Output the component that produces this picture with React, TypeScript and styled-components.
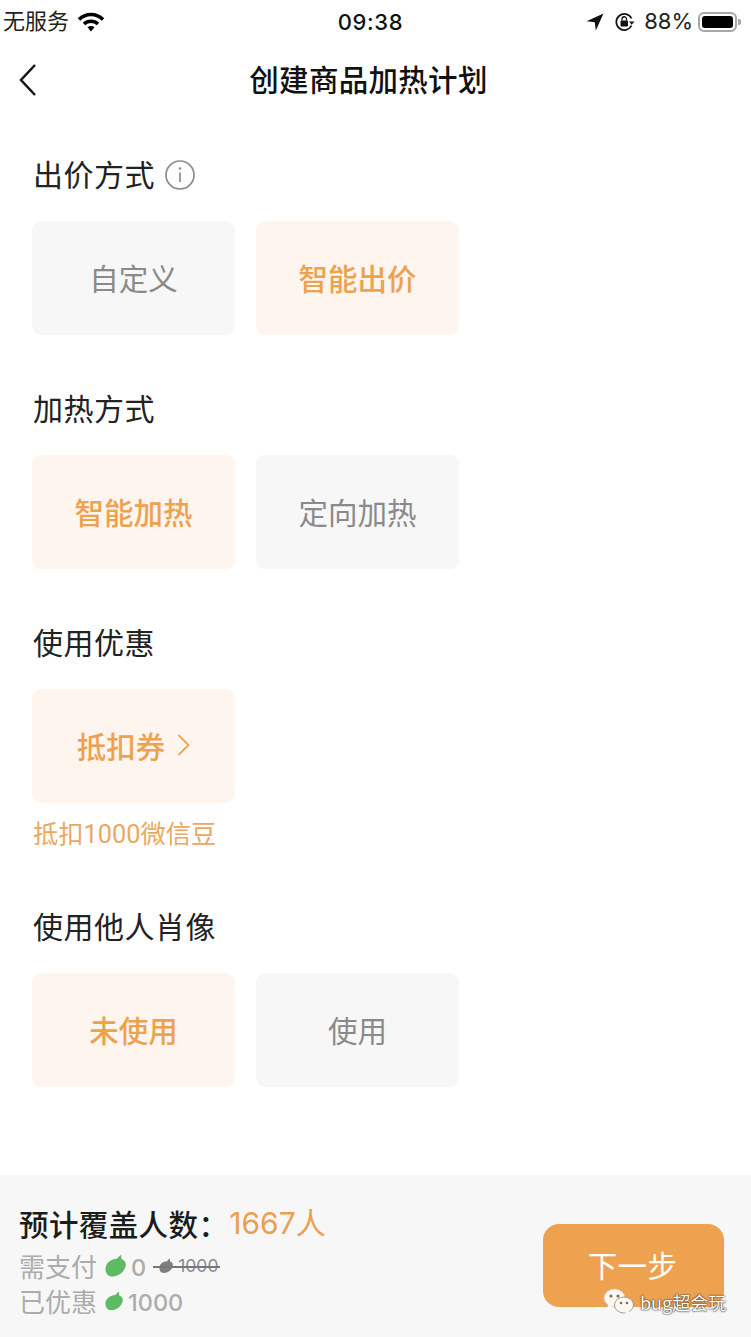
import React from "react";
import styled, { createGlobalStyle } from "styled-components";

const Global = createGlobalStyle`
  html, body { margin: 0; padding: 0; background: #fff; }
  * { box-sizing: border-box; }
  body { font-family: "Inter", "Noto Sans CJK SC", sans-serif; }
`;
const CJK = `"Noto Sans CJK SC", sans-serif`;
const Page = styled.div`
  position: relative; width: 751px; height: 1337px; display: flex; flex-direction: column; overflow: hidden; background: #fff;
`;
const StatusBar = styled.div`
  height: 41px; padding: 0 0 0 3px; display: grid; grid-template-columns: 1fr auto 1fr; align-items: center; color: #111;
`;
const StatusGroup = styled.div<{ $end?: boolean }>`
  display: flex; align-items: center; gap: 8px; justify-content: ${(p) => (p.$end ? "flex-end" : "flex-start")};
  padding-right: ${(p) => (p.$end ? "14px" : "0")};
`;
const Carrier = styled.span`font: 400 22px/37px ${CJK}; color: #222; padding-bottom: 4px;`;
const Clock = styled.span`font: 500 22px/41px "Inter", sans-serif; letter-spacing: 0.6px; color: #111; margin-right: 13px; padding-top: 2px;`;
const Percent = styled.span`font: 400 22px/41px "Inter", sans-serif; color: #222;  margin-left: 1px;`;
const LocationIcon = styled.svg`margin-right: 2px;`;
const Battery = styled.div`
  position: relative; width: 39px; height: 20px; margin-left: -3px; border: 2px solid #a8a8a8; border-radius: 6px; padding: 2px;
  &::after { content: ""; position: absolute; right: -6px; top: 5px; width: 3px; height: 6px; background: #a8a8a8; border-radius: 0 2px 2px 0; }
`;
const BatteryFill = styled.div`height: 100%; background: #000; border-radius: 3px;`;
const Nav = styled.div`
  position: relative; height: 79px; display: flex; align-items: center; justify-content: center; padding: 0 14px 5px 0;
`;
const Back = styled.svg`position: absolute; left: 18px; top: 22px;`;
const Title = styled.h1`margin: 0; font: 500 29.500px/40px ${CJK}; color: #111; letter-spacing: 0.3px;`;
const Main = styled.main`flex: 1; padding: 33px 0 0 32px;`;
const Section = styled.section`margin-bottom: 52px;`;
const LabelRow = styled.div`display: flex; align-items: center; gap: 10px; height: 44px; margin-bottom: 24px;`;
const Label = styled.h2`margin: 0; padding: 0 0 4px 1px; font: 400 30px/40px ${CJK}; color: #222; letter-spacing: 0.5px;`;
const Options = styled.div`display: flex; gap: 21px;`;
const Option = styled.div<{ $active?: boolean }>`
  width: 203px; height: 114px; border-radius: 9px; display: flex; align-items: center; justify-content: center; gap: 12px; padding-bottom: 3px;
  background: ${(p) => (p.$active ? "#fdf5ee" : "#f7f7f7")};
  color: ${(p) => (p.$active ? "#eda250" : "#8a8a8a")};
  font: ${(p) => (p.$active ? 500 : 400)} 29.500px/40px ${CJK};
`;
const Hint = styled.div`margin: 12px 0 -2px 1px; font: 400 25.300px/40px "Roboto", ${CJK}; color: #eaa860;`;
const Footer = styled.footer`
  height: 162px; background: #f7f7f7; padding: 29px 27px 0 19px; display: flex; justify-content: space-between;
`;
const Summary = styled.div`display: flex; flex-direction: column;`;
const Estimate = styled.div`display: flex; align-items: center; height: 40px; margin-bottom: 4px; font: 500 29.500px/36px ${CJK}; color: #1c1c1c; letter-spacing: 0.4px; padding-bottom: 2px;`;
const EstimateValue = styled.span`color: #eb9f50; font: 400 30px/36px "Inter", ${CJK}; margin-left: 1px; letter-spacing: 0;`;
const Price = styled.div`display: flex; align-items: center; height: 35px; color: #acacac; font: 400 26px/35px ${CJK}; gap: 8px;`;
const Amount = styled.span`font: 500 23.500px/35px "Inter", sans-serif; margin-left: -3px; padding-top: 3px;`;
const Struck = styled.span`
  position: relative; display: inline-flex; align-items: center; gap: 5px; font: 400 17.500px/24px "Inter", sans-serif; color: #8a8a8a; width: 67px; padding: 1px 0 0 6px; margin-left: -1px;
  &::after { content: ""; position: absolute; left: 0; right: 0; top: 13px; height: 1.500px; background: #777; }
`;
const NextButton = styled.button`
  width: 181px; height: 83px; margin-top: 20px; border: none; border-radius: 16px; background: #eea24f; color: #fff; font: 400 29.500px/40px ${CJK}; letter-spacing: 0.3px; padding: 0 2px 4px 0;
`;
const Watermark = styled.div`
  position: absolute; left: 603px; top: 1288px; display: flex; align-items: center; gap: 5px; color: #fff; font: 400 18px/26px ${CJK};
  text-shadow: 0 0 2px #222, 0 0 1px #222;
`;

const Bean = ({ size = 21, color = "#5dbb63" }: { size?: number; color?: string }) => (
  <svg width={size} height={size * 1.1} viewBox="0 0 20 22">
    <path d="M0.500 14C0.500 8.500 6 4.500 11.500 4.500C12.500 3 14 1.500 16 0.500C15.300 2 15.300 3.500 16 5C19 6 20.500 8.500 19.500 12C18 17.500 12.500 21.500 6.500 21.500C3 21.500 0.500 18.500 0.500 14Z" fill={color} />
  </svg>
);

export default function App() {
  return (
    <Page>
      <Global />
      <StatusBar>
        <StatusGroup>
          <Carrier>无服务</Carrier>
          <svg width="28" height="21" viewBox="0 0 28 21" fill="none">
            <path d="M2 8.500C8.800 1.800 19.200 1.800 26 8.500" stroke="#000" strokeWidth="3.600" />
            <path d="M7 13C11 9.300 17 9.300 21 13" stroke="#000" strokeWidth="3.600" />
            <path d="M10.500 16.200C12.500 14.500 15.500 14.500 17.500 16.200L14 20.500Z" fill="#000" />
          </svg>
        </StatusGroup>
        <Clock>09:38</Clock>
        <StatusGroup $end>
          <LocationIcon width="18" height="18" viewBox="0 0 17 17">
            <path d="M16.500 0.500L0.500 7.800L8.300 8.700L9.300 16.500Z" fill="#111" />
          </LocationIcon>
          <svg width="21" height="20" viewBox="0 0 21 20" fill="none">
            <path d="M17.500 13.500A8 8 0 1 1 17.500 6.500" stroke="#111" strokeWidth="1.700" />
            <path d="M15 9.500L20.500 9.500L17.700 12.700Z" fill="#111" />
            <rect x="6.500" y="8.500" width="7.500" height="6" rx="1" fill="#111" />
            <path d="M8 8.500V7A2.200 2.200 0 0 1 12.500 7V8.500" stroke="#111" strokeWidth="1.300" />
          </svg>
          <Percent>88%</Percent>
          <Battery><BatteryFill /></Battery>
        </StatusGroup>
      </StatusBar>
      <Nav>
        <Back width="20" height="34" viewBox="0 0 20 34" fill="none">
          <path d="M17 2L3 17L17 32" stroke="#111" strokeWidth="2.500" />
        </Back>
        <Title>创建商品加热计划</Title>
      </Nav>
      <Main>
        <Section>
          <LabelRow>
            <Label>出价方式</Label>
            <svg width="30" height="30" viewBox="0 0 30 30" fill="none">
              <circle cx="15" cy="15" r="14" stroke="#8c8c8c" strokeWidth="1.700" />
              <circle cx="15" cy="8.500" r="1.300" fill="#8c8c8c" />
              <path d="M15 12.500V22" stroke="#8c8c8c" strokeWidth="1.700" />
            </svg>
          </LabelRow>
          <Options>
            <Option>自定义</Option>
            <Option $active>智能出价</Option>
          </Options>
        </Section>
        <Section>
          <LabelRow><Label>加热方式</Label></LabelRow>
          <Options>
            <Option $active>智能加热</Option>
            <Option>定向加热</Option>
          </Options>
        </Section>
        <Section>
          <LabelRow><Label>使用优惠</Label></LabelRow>
          <Options>
            <Option $active>
              抵扣券
              <svg width="13" height="24" viewBox="0 0 13 24" fill="none">
                <path d="M1.500 2L11.500 12L1.500 22" stroke="#eda250" strokeWidth="1.800" />
              </svg>
            </Option>
          </Options>
          <Hint>抵扣1000微信豆</Hint>
        </Section>
        <Section>
          <LabelRow><Label>使用他人肖像</Label></LabelRow>
          <Options>
            <Option $active>未使用</Option>
            <Option>使用</Option>
          </Options>
        </Section>
      </Main>
      <Footer>
        <Summary>
          <Estimate>预计覆盖人数：<EstimateValue>1667人</EstimateValue></Estimate>
          <Price>
            需支付
            <Bean />
            <Amount>0</Amount>
            <Struck><Bean size={14} color="#7f7f7f" />1000</Struck>
          </Price>
          <Price>
            已优惠
            <Bean size={18} />
            <Amount>1000</Amount>
          </Price>
        </Summary>
        <NextButton>下一步</NextButton>
      </Footer>
      <Watermark>
        <svg width="32" height="28" viewBox="0 0 32 28">
          <ellipse cx="11.500" cy="10" rx="10.500" ry="9" fill="#fff8f0" stroke="#ccc" strokeWidth="0.800" />
          <path d="M5 17L4 22L10 18Z" fill="#fff8f0" />
          <circle cx="8" cy="8" r="1.600" fill="#8a6a50" />
          <circle cx="15" cy="8" r="1.600" fill="#8a6a50" />
          <ellipse cx="21" cy="17" rx="9.500" ry="8" fill="#fff8f0" stroke="#888" strokeWidth="0.800" />
          <path d="M26 23L28 27L21 25Z" fill="#fff8f0" />
          <circle cx="18" cy="15" r="1.300" fill="#8a6a50" />
          <circle cx="24" cy="15" r="1.300" fill="#8a6a50" />
        </svg>
        bug超会玩
      </Watermark>
    </Page>
  );
}
